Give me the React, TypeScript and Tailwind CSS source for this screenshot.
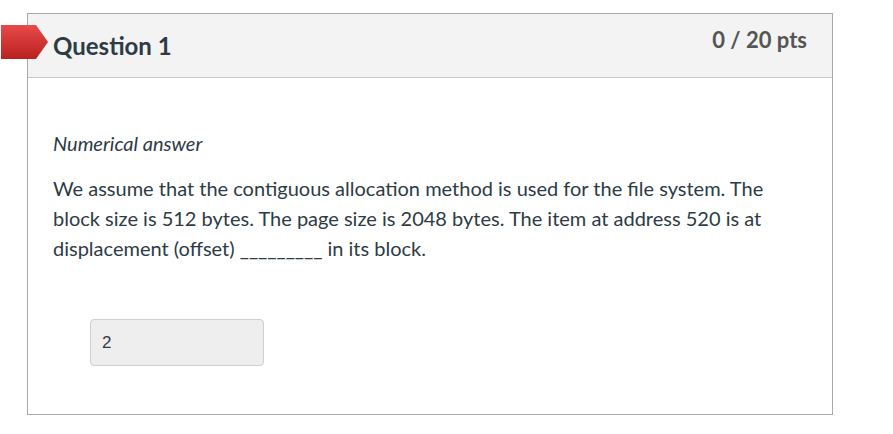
export default function App() {
  return (
    <div className="min-h-[434px] bg-white pt-[13px] pl-[27px] font-['Lato','Noto_Sans',sans-serif] text-[#2d3b45]">
      <div className="relative w-[806px] border border-[#a8a8a8]">
        {/* header */}
        <div className="flex h-[64px] items-start justify-between border-b border-[#c7c7c7] bg-[#f3f3f3] pl-[25px] pr-[25px]">
          <h2 className="mt-[16px] text-[24px] font-bold leading-[32px]">Question 1</h2>
          <div className="mt-[11px] text-[22px] font-bold leading-[30px] text-[#555]">0 / 20 pts</div>
        </div>
        {/* flag */}
        <svg className="absolute left-[-27px] top-[11px]" width="47" height="34" viewBox="0 0 47 34">
          <defs>
            <linearGradient id="flag" x1="0" y1="0" x2="0" y2="1">
              <stop offset="0" stopColor="#e84a4a" />
              <stop offset="1" stopColor="#b8211f" />
            </linearGradient>
          </defs>
          <polygon points="0,0 35,0 47,17 35,34 0,34" fill="url(#flag)" />
        </svg>
        {/* body */}
        <div className="px-[25px] pt-[50px] pb-[48px]">
          <div className="text-[20px] italic leading-[30px]">Numerical answer</div>
          <p className="mt-[15px] w-[740px] text-[20px] leading-[30px]">
            We assume that the contiguous allocation method is used for the file system. The block size is 512 bytes. The page size is 2048 bytes. The item at address 520 is at displacement (offset) _________ in its block.
          </p>
          <div className="mt-[56px] pl-[37px]">
            <div className="flex h-[47px] w-[174px] items-center rounded-[4px] border border-[#cfcfcf] bg-[#eeeeee] pl-[11px] font-['Liberation_Sans',Arial,sans-serif] text-[17px] text-[#2d3b45]">
              2
            </div>
          </div>
        </div>
      </div>
    </div>
  );
}
